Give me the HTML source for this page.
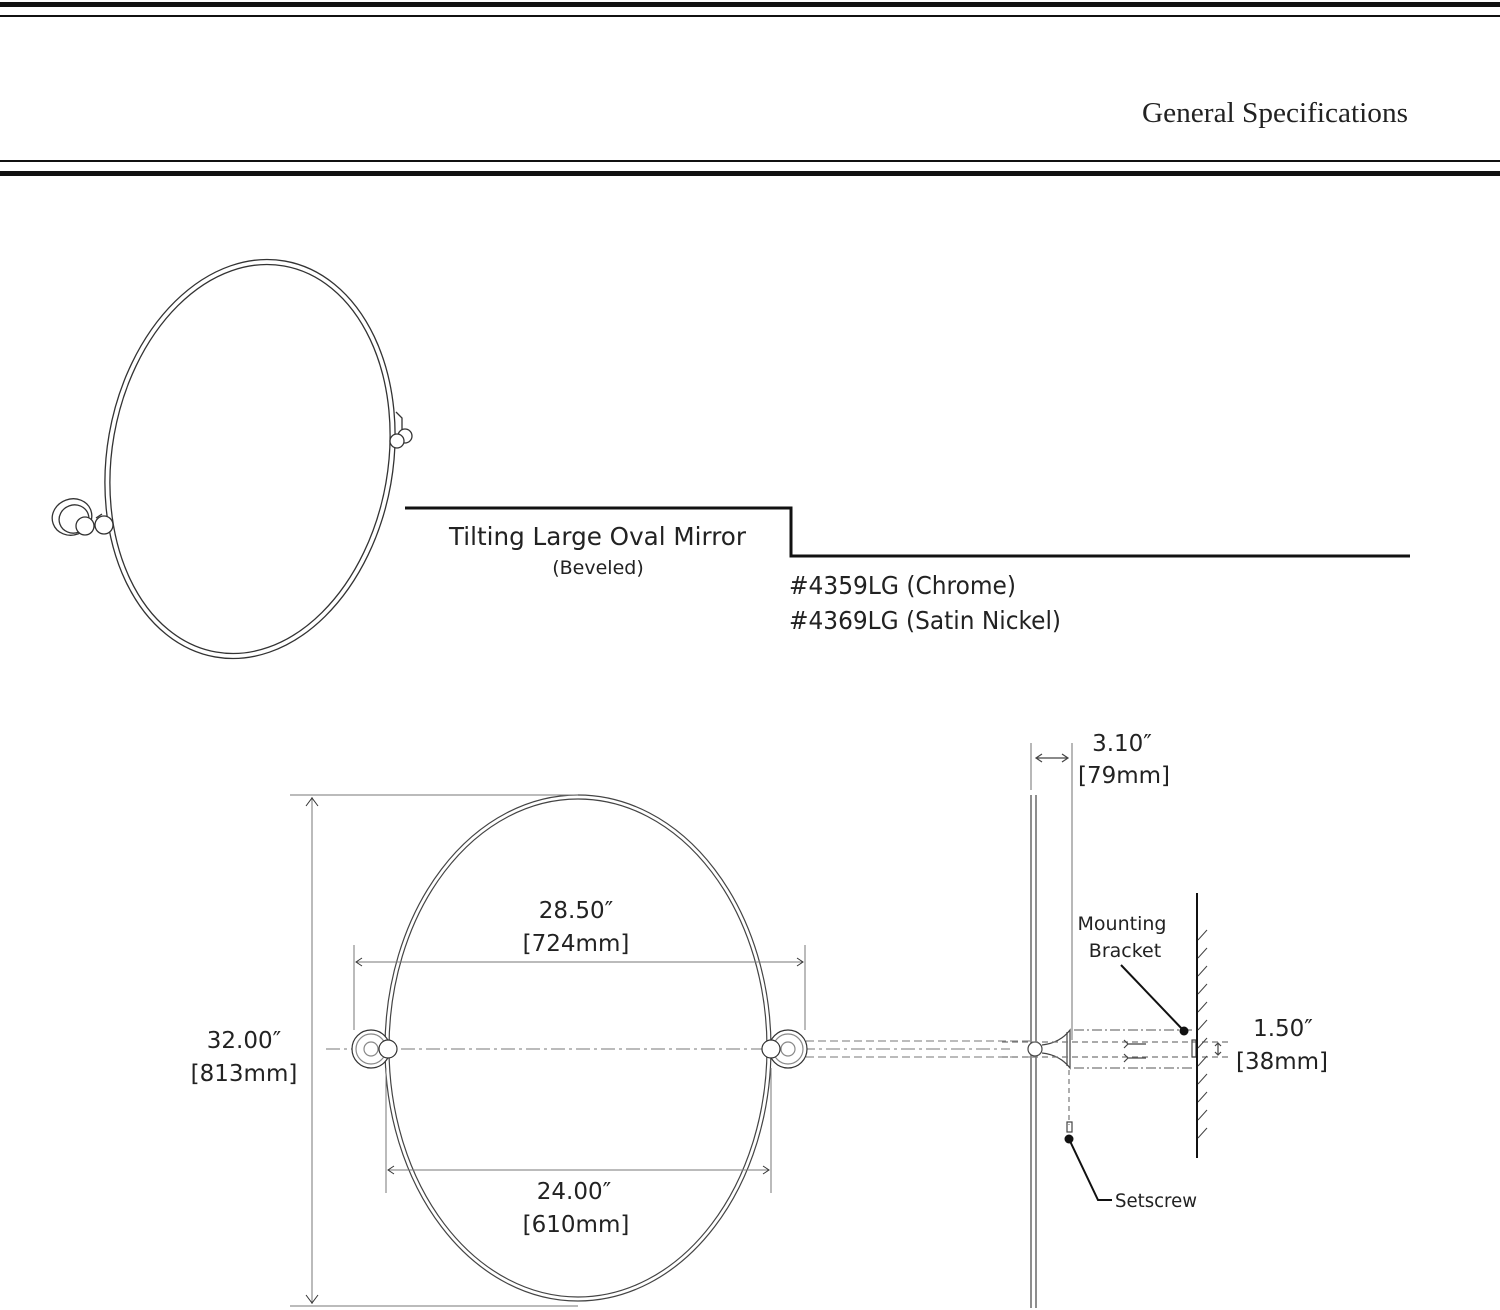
<!DOCTYPE html>
<html><head><style>
html,body{margin:0;padding:0;background:#fff;width:1500px;height:1310px;overflow:hidden}
svg{display:block}
text{font-family:"DejaVu Sans","Liberation Sans",sans-serif;fill:#222}
</style></head><body>
<svg width="1500" height="1310" viewBox="0 0 1500 1310" xmlns="http://www.w3.org/2000/svg">
<rect x="0" y="2" width="1500" height="5" fill="#111"/>
<rect x="0" y="15" width="1500" height="2" fill="#111"/>
<rect x="0" y="160" width="1500" height="2" fill="#111"/>
<rect x="0" y="171" width="1500" height="5" fill="#111"/>
<text x="1408" y="122" text-anchor="end" style="font-family:'Liberation Serif',serif;font-size:28px;fill:#222" textLength="266" lengthAdjust="spacingAndGlyphs">General Specifications</text>

<g fill="none" stroke="#333" stroke-width="1.3">
<ellipse cx="250" cy="459" rx="143" ry="201" transform="rotate(10 250 459)"/>
<ellipse cx="250" cy="459" rx="138" ry="196" transform="rotate(10 250 459)"/>
<ellipse cx="72" cy="517" rx="20" ry="18" transform="rotate(-20 72 517)"/>
<ellipse cx="74" cy="519" rx="15" ry="14" transform="rotate(-20 74 519)"/>
<circle cx="85" cy="526" r="9" fill="#fff"/>
<circle cx="104" cy="525" r="9" fill="#fff"/>
<path d="M96 518 l6 -4"/>
<path d="M396 412 l6 6 l0 16"/>
<circle cx="405" cy="436" r="7" fill="#fff"/>
<circle cx="397" cy="441" r="7" fill="#fff"/>
</g>

<path d="M405 508 H791 V556 H1410" fill="none" stroke="#111" stroke-width="3"/>
<text x="449" y="545" font-size="25" textLength="297" lengthAdjust="spacingAndGlyphs">Tilting Large Oval Mirror</text>
<text x="598" y="574" text-anchor="middle" font-size="19">(Beveled)</text>
<text x="789" y="594" font-size="25" textLength="227" lengthAdjust="spacingAndGlyphs">#4359LG (Chrome)</text>
<text x="789" y="629" font-size="25" textLength="272" lengthAdjust="spacingAndGlyphs">#4369LG (Satin Nickel)</text>

<g fill="none" stroke="#444" stroke-width="1.2">
<ellipse cx="578" cy="1048" rx="193" ry="253"/>
<ellipse cx="578" cy="1048" rx="189" ry="249"/>
</g>
<g stroke="#777" stroke-width="1" fill="none">
<path d="M290 795 H578"/>
<path d="M290 1306 H578"/>
<path d="M312 797 V1304"/>
<path d="M306 806 l6 -8 l6 8 M306 1295 l6 8 l6 -8" stroke="#333"/>
<path d="M354 945 V1030 M805 945 V1030"/>
<path d="M356 962 H803"/>
<path d="M362 958 l-6 4 l6 4 M797 958 l6 4 l-6 4" stroke="#333"/>
<path d="M386 1068 V1193 M771 1068 V1193"/>
<path d="M388 1170 H769"/>
<path d="M394 1166 l-6 4 l6 4 M763 1166 l6 4 l-6 4" stroke="#333"/>
<path d="M326 1049 H1010" stroke-dasharray="14 4 3 4"/>
<path d="M806 1041 H1030 M806 1057 H1030" stroke-dasharray="8 4"/>
</g>
<g fill="#fff" stroke="#333" stroke-width="1.2">
<circle cx="371" cy="1049" r="19"/><circle cx="371" cy="1049" r="15" stroke="#888"/><circle cx="371" cy="1049" r="7" stroke="#888"/>
<circle cx="788" cy="1049" r="19"/><circle cx="788" cy="1049" r="15" stroke="#888"/><circle cx="788" cy="1049" r="7" stroke="#888"/>
<circle cx="388" cy="1049" r="9"/>
<circle cx="771" cy="1049" r="9"/>
</g>
<text x="576" y="918" text-anchor="middle" font-size="23">28.50″</text>
<text x="576" y="951" text-anchor="middle" font-size="23">[724mm]</text>
<text x="574" y="1199" text-anchor="middle" font-size="23">24.00″</text>
<text x="576" y="1232" text-anchor="middle" font-size="23">[610mm]</text>
<text x="244" y="1048" text-anchor="middle" font-size="23">32.00″</text>
<text x="244" y="1081" text-anchor="middle" font-size="23">[813mm]</text>

<g fill="none" stroke="#444" stroke-width="1.2">
<path d="M1031 795 V1308 M1036 795 V1308"/>
<path d="M1031 743 V790 M1072 743 V1040" stroke="#888"/>
<path d="M1036 758 H1068 M1042 754 l-6 4 l6 4 M1062 754 l6 4 l-6 4"/>
<circle cx="1035" cy="1049" r="7" fill="#fff"/>
<path d="M1042 1045 Q1060 1043 1070 1030 V1068 Q1060 1055 1042 1053"/>
<path d="M1067 1032 V1066"/>
<path d="M1074 1030 H1195 M1074 1068 H1195" stroke="#777" stroke-dasharray="10 3 2 3"/>
<path d="M1002 1042 H1232 M1002 1057 H1232" stroke="#777" stroke-dasharray="6 4"/>
<path d="M1069 1070 V1125" stroke="#777" stroke-dasharray="5 4"/>
<path d="M1124 1040 l4 4 l-4 4 M1128 1044 H1146 M1124 1054 l4 4 l-4 4 M1128 1058 H1146"/>
<rect x="1192" y="1040" width="4" height="17"/>
<path d="M1218 1043 V1055 M1215 1046 l3 -3 l3 3 M1215 1052 l3 3 l3 -3"/>
<rect x="1067" y="1122" width="5" height="10"/>
</g>
<path d="M1197 893 V1158" stroke="#111" stroke-width="2"/>
<g stroke="#444" stroke-width="1">
<path d="M1198 940 l9 -10 M1198 958 l9 -10 M1198 976 l9 -10 M1198 994 l9 -10 M1198 1012 l9 -10 M1198 1030 l9 -10 M1198 1048 l9 -10 M1198 1066 l9 -10 M1198 1084 l9 -10 M1198 1102 l9 -10 M1198 1120 l9 -10 M1198 1138 l9 -10"/>
</g>
<path d="M1121 965 L1184 1031" stroke="#111" stroke-width="2"/>
<circle cx="1184" cy="1031" r="4.5" fill="#111"/>
<path d="M1069 1139 L1098 1200 H1112" stroke="#111" stroke-width="2" fill="none"/>
<circle cx="1069" cy="1139" r="4.5" fill="#111"/>
<text x="1122" y="751" text-anchor="middle" font-size="23">3.10″</text>
<text x="1124" y="783" text-anchor="middle" font-size="23">[79mm]</text>
<text x="1122" y="930" text-anchor="middle" font-size="19">Mounting</text>
<text x="1125" y="957" text-anchor="middle" font-size="19">Bracket</text>
<text x="1283" y="1036" text-anchor="middle" font-size="23">1.50″</text>
<text x="1282" y="1069" text-anchor="middle" font-size="23">[38mm]</text>
<text x="1115" y="1207" font-size="19" textLength="82" lengthAdjust="spacingAndGlyphs">Setscrew</text>
</svg>
</body></html>
